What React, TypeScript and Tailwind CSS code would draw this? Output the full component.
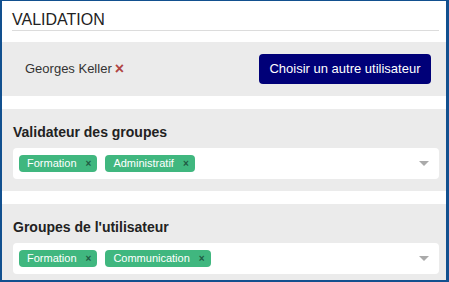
const Tag = ({ label }: { label: string }) => (
  <span className="flex items-center h-[17px] rounded-[4px] bg-[#40b77f] pl-[8px] pr-[6px] text-[11px] text-white">
    {label}
    <span className="ml-[9px] text-[10px] font-bold text-[#1f5a43]">×</span>
  </span>
);

const GroupSelect = ({ title, tags }: { title: string; tags: string[] }) => (
  <section className="bg-[#ebebeb] pl-[11px] pr-[7px] pt-[14px] pb-[12px]">
    <h2 className="text-[14px] font-bold text-[#222] leading-[18px] mb-[7px]">{title}</h2>
    <div className="flex items-center h-[31px] rounded-[4px] bg-white pl-[6px] pr-[10px] gap-[8px]">
      {tags.map((t) => (
        <Tag key={t} label={t} />
      ))}
      <span className="flex-1" />
      <span className="w-0 h-0 border-l-[5px] border-r-[5px] border-t-[5px] border-l-transparent border-r-transparent border-t-[#aaa]" />
    </div>
  </section>
);

export default function App() {
  return (
    <div className="w-[449px] h-[282px] bg-white border-l-2 border-r-[3px] border-t border-b-2 border-[#12508f] font-['Liberation_Sans',Arial,sans-serif] overflow-hidden">
      <div className="mx-[10px] mr-[7px] pt-[10px] pb-[1px] border-b border-[#dcdcdc]">
        <h1 className="text-[16px] leading-[18px] text-[#222] uppercase">Validation</h1>
      </div>
      <section className="mt-[11px] h-[54px] bg-[#ebebeb] flex items-center justify-between pl-[23px] pr-[15px]">
        <span className="flex items-center text-[13px] text-[#333]">
          Georges Keller
          <span className="ml-[3px] text-[16px] font-bold leading-none text-[#b04343]">×</span>
        </span>
        <button className="h-[30px] w-[172px] rounded-[4px] bg-[#000078] text-[13px] text-white">
          Choisir un autre utilisateur
        </button>
      </section>
      <div className="h-[13px]" />
      <GroupSelect title="Validateur des groupes" tags={["Formation", "Administratif"]} />
      <div className="h-[13px]" />
      <GroupSelect title="Groupes de l'utilisateur" tags={["Formation", "Communication"]} />
    </div>
  );
}
